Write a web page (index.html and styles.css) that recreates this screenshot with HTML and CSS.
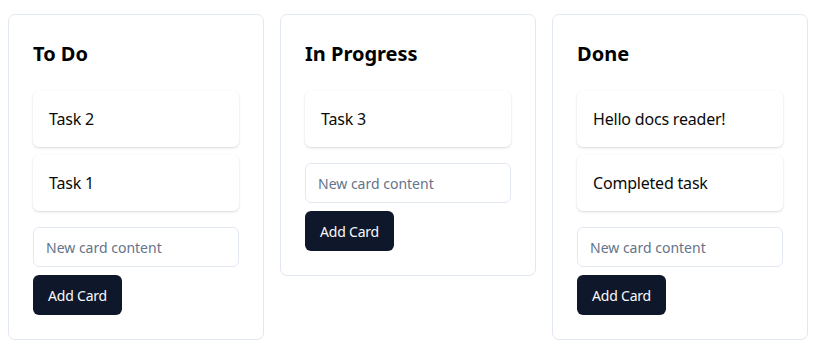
FILE: index.html
```html
<!DOCTYPE html>
<html lang="en">
<head>
<meta charset="utf-8">
<title>Kanban</title>
<link rel="stylesheet" href="styles.css">
</head>
<body>
<div class="board">
  <section class="column">
    <h2 class="column-title">To Do</h2>
    <div class="cards">
      <div class="card">Task 2</div>
      <div class="card">Task 1</div>
    </div>
    <input class="new-card" type="text" placeholder="New card content">
    <button class="add-btn">Add Card</button>
  </section>
  <section class="column">
    <h2 class="column-title">In Progress</h2>
    <div class="cards">
      <div class="card">Task 3</div>
    </div>
    <input class="new-card" type="text" placeholder="New card content">
    <button class="add-btn">Add Card</button>
  </section>
  <section class="column">
    <h2 class="column-title">Done</h2>
    <div class="cards">
      <div class="card">Hello docs reader!</div>
      <div class="card">Completed task</div>
    </div>
    <input class="new-card" type="text" placeholder="New card content">
    <button class="add-btn">Add Card</button>
  </section>
</div>
</body>
</html>
```
FILE: styles.css
```css
* { box-sizing: border-box; }
body {
  margin: 0;
  padding: 14px 8px 8px;
  font-family: "Noto Sans", "Open Sans", sans-serif;
  color: #0a0a0a;
  background: #fff;
}
.board {
  display: flex;
  gap: 16px;
  align-items: flex-start;
}
.column {
  width: 256px;
  border: 1px solid #e2e8f0;
  border-radius: 7px;
  padding: 24px;
  display: flex;
  flex-direction: column;
  background: #fff;
}
.column-title {
  margin: 0 0 24px;
  padding-top: 1px;
  height: 28px;
  font-size: 20px;
  line-height: 28px;
  font-weight: 700;
  color: #000;
}
.cards {
  display: flex;
  flex-direction: column;
  gap: 8px;
  margin-bottom: 16px;
}
.card {
  height: 56px;
  padding: 16px;
  font-size: 16px;
  line-height: 24px;
  letter-spacing: -0.2px;
  border-radius: 6px;
  background: #fff;
  box-shadow: 0 1px 3px rgba(0,0,0,0.1), 0 1px 2px rgba(0,0,0,0.06);
}
.new-card {
  height: 40px;
  width: 100%;
  border: 1px solid #e2e8f0;
  border-radius: 6px;
  padding: 0 12px;
  font-family: inherit;
  font-size: 14px;
  color: #0a0a0a;
  margin: 0 0 8px;
  outline: none;
}
.new-card::placeholder { color: #64748b; }
.add-btn {
  align-self: flex-start;
  height: 40px;
  padding: 0 15px;
  border: none;
  border-radius: 6px;
  background: #0f172a;
  color: #f8fafc;
  font-family: inherit;
  font-size: 14px;
  letter-spacing: -0.2px;
}
```
